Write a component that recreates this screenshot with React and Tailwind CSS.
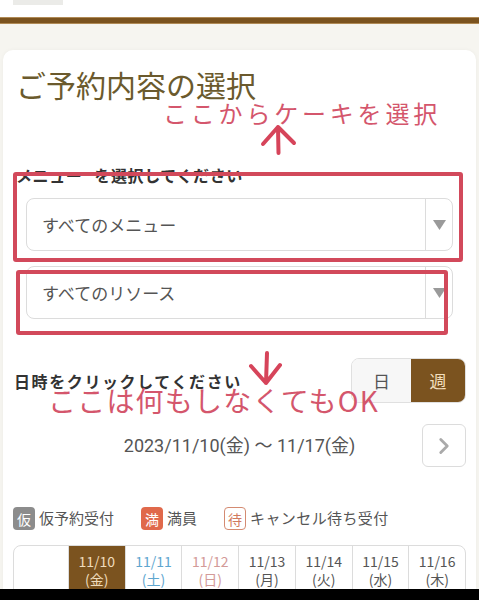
import { ChevronRight } from 'lucide-react'

const DAYS = [
  { d: '11/10', w: '(金)', tone: 'active' },
  { d: '11/11', w: '(土)', tone: 'sat' },
  { d: '11/12', w: '(日)', tone: 'sun' },
  { d: '11/13', w: '(月)', tone: '' },
  { d: '11/14', w: '(火)', tone: '' },
  { d: '11/15', w: '(水)', tone: '' },
  { d: '11/16', w: '(木)', tone: '' },
]

function Select({ label }) {
  return (
    <div className="mx-[13px] h-[53px] flex border border-[#dcdcdc] rounded-[8px] bg-white">
      <div className="flex-1 flex items-center pl-[15px] text-[17px] text-[#555]">{label}</div>
      <div className="w-[27px] border-l border-[#dcdcdc] flex items-center justify-center">
        <svg width="13" height="10" viewBox="0 0 13 10">
          <path d="M0 0h13L6.5 10z" fill="#9a9a9a" />
        </svg>
      </div>
    </div>
  )
}

function Badge({ ch, kind }) {
  const cls =
    kind === 'gray'
      ? 'bg-[#8c8c8c] text-white'
      : kind === 'full'
      ? 'bg-[#e0694b] text-white'
      : 'border border-[#d48b72] text-[#d27a5e] bg-white'
  return (
    <span className={`w-[22px] h-[23px] rounded-[4px] flex items-center justify-center text-[14px] leading-none ${cls}`}>
      {ch}
    </span>
  )
}

export default function App() {
  return (
    <div className="w-[479px] h-[600px] flex flex-col bg-black overflow-hidden font-['Noto_Sans_CJK_JP','Noto_Sans',sans-serif]">
      <div className="h-[589px] shrink-0 overflow-hidden bg-[#f6f5f0] flex flex-col">
        <header className="h-[17px] shrink-0 bg-white">
          <div className="ml-[13px] w-[50px] h-[5px] bg-[#ebebe8]" />
        </header>
        <div className="h-[7px] shrink-0 bg-[#7b531f] border-y border-[#b08a55]" />
        <div className="h-[26px] shrink-0" />

        <main className="relative flex-1 mx-[3px] bg-white rounded-t-[10px] px-[10px] pt-[16px] shadow-[0_0_4px_rgba(0,0,0,0.04)]">
          <h1 className="pl-[3px] text-[30px] leading-[36px] text-[#6b5a2d]">ご予約内容の選択</h1>

          <p className="mt-[61px] pl-[3px] text-[16px] leading-[24px] font-bold text-[#333] tracking-[0.6px]">
            メニュー<span className="ml-[12px]">を選択してください</span>
          </p>
          <div className="mt-[11px]">
            <Select label="すべてのメニュー" />
          </div>
          <div className="mt-[15px]">
            <Select label="すべてのリソース" />
          </div>

          <div className="mt-[39px] flex items-center justify-between">
            <p className="pl-[1px] text-[16px] leading-[24px] font-bold text-[#333] tracking-[1.6px]">日時をクリックしてください</p>
            <div className="flex h-[45px] w-[115px] rounded-[8px] overflow-hidden border border-[#e0e0e0]">
              <div className="w-[59px] bg-[#f7f7f7] flex items-center justify-center text-[17px] text-[#555]">日</div>
              <div className="flex-1 bg-[#7b531f] flex items-center justify-center text-[17px] text-[#f3dfbd]">週</div>
            </div>
          </div>

          <div className="mt-[21px] grid grid-cols-[44px_1fr_44px] items-center">
            <div />
            <p className="text-center text-[18px] text-[#555] font-['Roboto','Noto_Sans_CJK_JP',sans-serif]">2023/11/10(金) 〜 11/17(金)</p>
            <div className="h-[43px] border border-[#dcdcdc] rounded-[6px] flex items-center justify-center">
              <ChevronRight size={26} strokeWidth={2.6} className="text-[#aaaaaa]" />
            </div>
          </div>

          <div className="mt-[40px] flex items-center text-[15px] text-[#555]">
            <Badge ch="仮" kind="gray" />
            <span className="ml-[4px]">仮予約受付</span>
            <span className="ml-[27px]"><Badge ch="満" kind="full" /></span>
            <span className="ml-[4px]">満員</span>
            <span className="ml-[27px]"><Badge ch="待" kind="wait" /></span>
            <span className="ml-[4px] tracking-[0.4px]">キャンセル待ち受付</span>
          </div>

          <div className="mt-[15px] grid grid-cols-[54px_repeat(7,1fr)] border border-[#dcdcdc] rounded-t-[8px] overflow-hidden h-[60px]">
            <div />
            {DAYS.map(day => (
              <div
                key={day.d}
                className={`border-l border-[#dcdcdc] pt-[6px] flex flex-col items-center text-[14px] leading-[18px] ${
                  day.tone === 'active'
                    ? 'bg-[#7b531f] text-[#efdcbc]'
                    : day.tone === 'sat'
                    ? 'text-[#5ea6cf]'
                    : day.tone === 'sun'
                    ? 'text-[#d39a98]'
                    : 'text-[#555]'
                }`}
              >
                <span>{day.d}</span>
                <span>{day.w}</span>
              </div>
            ))}
          </div>

          {/* annotations drawn over the page */}
          <p className="absolute left-[160px] top-[48px] text-[24px] leading-[29px] tracking-[3.8px] text-[#d4566c]">
            ここからケーキを選択
          </p>
          <svg className="absolute left-[257px] top-[73px]" width="37" height="33" viewBox="0 0 37 33" fill="none">
            <path d="M18 4L18.5 30M3 21L18 4L34 20" stroke="#d6445a" strokeWidth="4" strokeLinecap="round" strokeLinejoin="round" />
          </svg>
          <div className="absolute left-[10px] top-[122px] w-[450px] h-[90px] border-[4px] border-[#d2495b] rounded-[3px]" />
          <div className="absolute left-[13px] top-[220px] w-[432px] h-[65px] border-[4px] border-[#d2495b] rounded-[3px]" />
          <svg className="absolute left-[243px] top-[300px]" width="38" height="36" viewBox="0 0 38 36" fill="none">
            <path d="M21 3L20 33M5 16L20 33L34 15" stroke="#d6445a" strokeWidth="4" strokeLinecap="round" strokeLinejoin="round" />
          </svg>
          <p className="absolute left-[45px] top-[334px] text-[28px] leading-[32px] tracking-[1.2px] text-[#d4566c]">
            ここは何もしなくてもOK
          </p>
        </main>
      </div>
      <div className="flex-1 bg-black" />
    </div>
  )
}
